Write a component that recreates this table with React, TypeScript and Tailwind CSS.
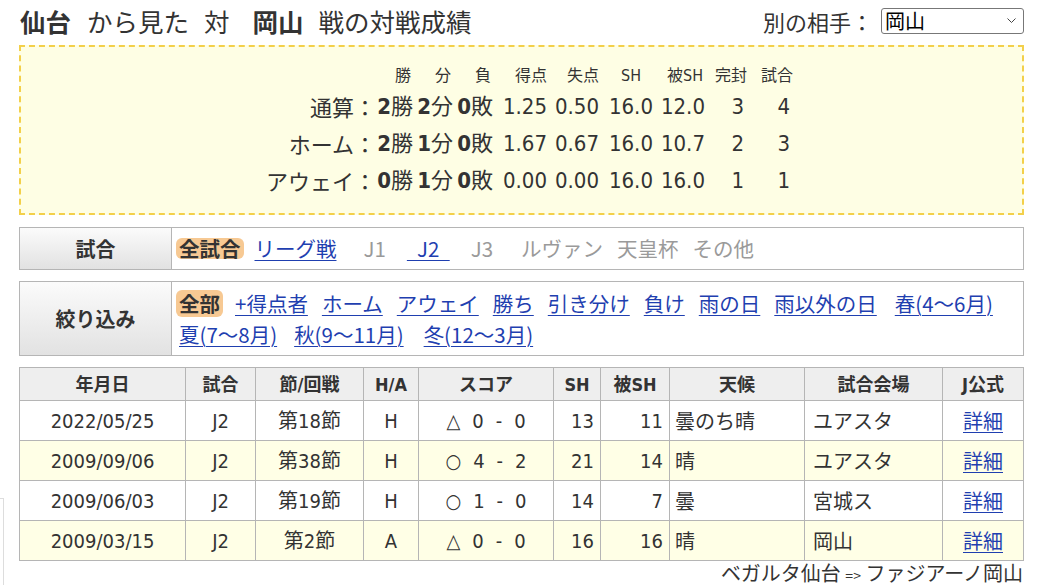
import React from 'react';

const jp = { fontFamily: '"Noto Sans CJK JP", "Noto Sans", sans-serif' };
const num = { fontFamily: '"Liberation Sans Narrow", "DejaVu Sans Condensed", "Noto Sans CJK JP", sans-serif' };

const stats = [
  { label: '通算：', w: '2', d: '2', l: '0', gf: '1.25', ga: '0.50', sh: '16.0', ssh: '12.0', cs: '3', g: '4' },
  { label: 'ホーム：', w: '2', d: '1', l: '0', gf: '1.67', ga: '0.67', sh: '16.0', ssh: '10.7', cs: '2', g: '3' },
  { label: 'アウェイ：', w: '0', d: '1', l: '0', gf: '0.00', ga: '0.00', sh: '16.0', ssh: '16.0', cs: '1', g: '1' },
];

const games = [
  { date: '2022/05/25', comp: 'J2', sec: '第18節', ha: 'H', mark: '△', a: '0', b: '0', sh: 13, ssh: 11, weather: '曇のち晴', venue: 'ユアスタ' },
  { date: '2009/09/06', comp: 'J2', sec: '第38節', ha: 'H', mark: '○', a: '4', b: '2', sh: 21, ssh: 14, weather: '晴', venue: 'ユアスタ' },
  { date: '2009/06/03', comp: 'J2', sec: '第19節', ha: 'H', mark: '○', a: '1', b: '0', sh: 14, ssh: 7, weather: '曇', venue: '宮城ス' },
  { date: '2009/03/15', comp: 'J2', sec: '第2節', ha: 'A', mark: '△', a: '0', b: '0', sh: 16, ssh: 16, weather: '晴', venue: '岡山' },
];

const Badge = ({ children }: { children: React.ReactNode }) => (
  <span className="bg-[#f7c993] rounded-md px-[3px] font-bold text-[#333]">{children}</span>
);

const Link = ({ children }: { children: React.ReactNode }) => (
  <a href="#" className="text-[#1f3fb0] underline underline-offset-[3px] decoration-1">{children}</a>
);

const Off = ({ children, className = '' }: { children: React.ReactNode; className?: string }) => (
  <span className={`text-[#9a9a9a] ${className}`}>{children}</span>
);

const FilterLabel = ({ children }: { children: React.ReactNode }) => (
  <div className="w-[152px] shrink-0 flex items-center justify-center border-r border-[#b5b5b5] bg-gradient-to-b from-[#fbfbfb] to-[#e2e2e2] font-bold text-[20px] text-[#333]">
    {children}
  </div>
);

export default function App() {
  return (
    <div className="relative bg-white min-h-[585px] overflow-hidden text-[#333]" style={jp}>
      <div className="absolute left-[-100px] top-[498px] w-[104px] h-[120px] border border-[#dddddd]" />
      <div className="ml-[19px] w-[1005px]">
        <div className="flex items-center justify-between h-[40px] pt-[1px]">
          <h1 className="text-[25.5px] leading-none ml-[1px] whitespace-nowrap">
            <b>仙台</b>
            <span className="ml-[16px]">から見た</span>
            <span className="ml-[15px]">対</span>
            <b className="ml-[23px]">岡山</b>
            <span className="ml-[15px]">戦の対戦成績</span>
          </h1>
          <div className="flex items-center">
            <span className="text-[22px] leading-none mr-[8px]">別の相手：</span>
            <div className="w-[143px] h-[26px] border border-[#777] rounded-[3px] flex items-center justify-between pl-[3px] pr-[7px]">
              <span className="text-[20px] leading-none text-black">岡山</span>
              <svg width="9" height="5" viewBox="0 0 9 5"><path d="M0.5 0.5l4 4 4-4" fill="none" stroke="#444" strokeWidth="1" /></svg>
            </div>
          </div>
        </div>

        <div className="mt-[5px] h-[170px] border-2 border-dashed border-[#f3d04a] bg-[#fefee4] pt-[17px]">
          <div className="grid grid-cols-[355px_37px_40px_40px_54px_52px_54px_52px_42px_46px] items-center">
            <div className="h-[24px]" />
            {['勝', '分', '負', '得点', '失点', 'SH', '被SH', '完封', '試合'].map((h, i) => (
              <div key={h} className={`text-[16px] leading-[24px] ${i < 3 ? 'text-right pr-[2px]' : i === 5 ? 'text-center pl-[10px]' : i === 6 ? 'text-right pr-[2px]' : 'text-right'}`} style={num}>{h}</div>
            ))}
            {stats.map((s) => (
              <React.Fragment key={s.label}>
                <div className="text-right text-[22px] leading-[37px] h-[37px]">{s.label}</div>
                <div className="text-right text-[22px] leading-[37px]" style={num}><b>{s.w}</b>勝</div>
                <div className="text-right text-[22px] leading-[37px]" style={num}><b>{s.d}</b>分</div>
                <div className="text-right text-[22px] leading-[37px]" style={num}><b>{s.l}</b>敗</div>
                <div className="text-right text-[22px] leading-[37px]" style={num}>{s.gf}</div>
                <div className="text-right text-[22px] leading-[37px]" style={num}>{s.ga}</div>
                <div className="text-right text-[22px] leading-[37px]" style={num}>{s.sh}</div>
                <div className="text-right text-[22px] leading-[37px]" style={num}>{s.ssh}</div>
                <div className="text-right text-[22px] leading-[37px] pr-[3px]" style={num}>{s.cs}</div>
                <div className="text-right text-[22px] leading-[37px] pr-[3px]" style={num}>{s.g}</div>
              </React.Fragment>
            ))}
          </div>
        </div>

        <div className="mt-[12px] flex h-[43px] border border-[#b5b5b5]">
          <FilterLabel>試合</FilterLabel>
          <div className="flex items-center gap-x-[14px] pl-[4px] text-[20.5px] leading-none whitespace-pre">
            <Badge>全試合</Badge>
            <span className="-ml-[3px]"><Link>リーグ戦</Link></span>
            <Off className="pl-[13px] pr-[7px]">J1</Off>
            <Link>{'\u2002J2\u2002'}</Link>
            <Off className="pl-[7px] pr-[14px]">J3</Off>
            <Off>ルヴァン</Off>
            <Off>天皇杯</Off>
            <Off>その他</Off>
          </div>
        </div>

        <div className="mt-[11px] flex h-[75px] border border-[#b5b5b5]">
          <FilterLabel>絞り込み</FilterLabel>
          <div className="flex flex-wrap content-center items-center gap-x-[14px] gap-y-[4px] pl-[4px] pr-[6px] text-[20.5px] leading-[27px]">
            <Badge>全部</Badge>
            <span className="-ml-[2px]"><Link>+得点者</Link></span>
            <Link>ホーム</Link>
            <Link>アウェイ</Link>
            <Link>勝ち</Link>
            <Link>引き分け</Link>
            <Link>負け</Link>
            <Link>雨の日</Link>
            <Link>雨以外の日</Link>
            <span className="pl-[4px]"><Link>春(4〜6月)</Link></span>
            <span className="pl-[3px]"><Link>夏(7〜8月)</Link></span>
            <span className="pl-[3px]"><Link>秋(9〜11月)</Link></span>
            <span className="pl-[6px]"><Link>冬(12〜3月)</Link></span>
          </div>
        </div>

        <table className="mt-[11px] w-full border-collapse border border-[#b5b5b5] text-[20px]" style={num}>
          <thead>
            <tr className="bg-[#eeeeee] h-[33px] text-[18px]">
              {[
                ['年月日', 'w-[166px]'], ['試合', 'w-[70px]'], ['節/回戦', 'w-[108px]'], ['H/A', 'w-[55px]'],
                ['スコア', 'w-[135px]'], ['SH', 'w-[47px]'], ['被SH', 'w-[69px]'], ['天候', 'w-[135px]'],
                ['試合会場', 'w-[138px]'], ['J公式', ''],
              ].map(([h, w]) => (
                <th key={h} className={`${w} border border-[#b5b5b5] font-bold`}>{h}</th>
              ))}
            </tr>
          </thead>
          <tbody>
            {games.map((g, i) => (
              <tr key={g.date} className={`h-[40px] ${i % 2 ? 'bg-[#ffffe6]' : 'bg-white'}`}>
                <td className="border border-[#b5b5b5] text-center">{g.date}</td>
                <td className="border border-[#b5b5b5] text-center">{g.comp}</td>
                <td className="border border-[#b5b5b5] text-center">{g.sec}</td>
                <td className="border border-[#b5b5b5] text-center">{g.ha}</td>
                <td className="border border-[#b5b5b5]">
                  <div className="flex justify-center gap-x-[12px]">
                    <span>{g.mark}</span>
                    <span>{g.a}</span>
                    <span>-</span>
                    <span>{g.b}</span>
                  </div>
                </td>
                <td className="border border-[#b5b5b5] text-right pr-[6px]">{g.sh}</td>
                <td className="border border-[#b5b5b5] text-right pr-[6px]">{g.ssh}</td>
                <td className="border border-[#b5b5b5] text-left pl-[5px]" style={jp}>{g.weather}</td>
                <td className="border border-[#b5b5b5] text-left pl-[8px]" style={jp}>{g.venue}</td>
                <td className="border border-[#b5b5b5] text-center" style={jp}><Link>詳細</Link></td>
              </tr>
            ))}
          </tbody>
        </table>

        <div className="text-right text-[20px] leading-[24px] pr-[1px] whitespace-pre">
          ベガルタ仙台 <span className="text-[14px]">=&gt;</span> ファジアーノ岡山
        </div>
      </div>
    </div>
  );
}
